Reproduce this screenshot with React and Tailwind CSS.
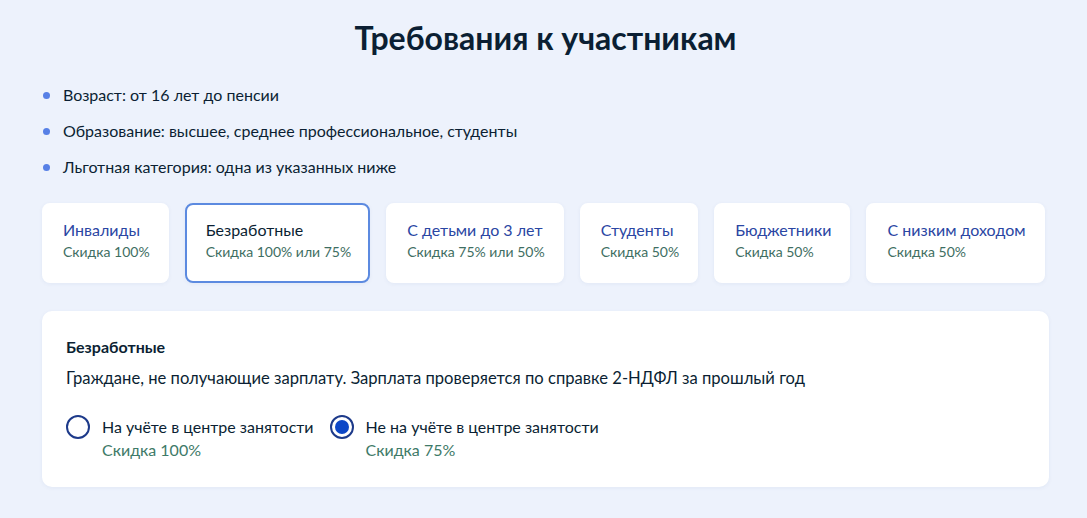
import { useState } from "react";

const categories = [
  { title: "Инвалиды", discount: "Скидка 100%" },
  { title: "Безработные", discount: "Скидка 100% или 75%" },
  { title: "С детьми до 3 лет", discount: "Скидка 75% или 50%" },
  { title: "Студенты", discount: "Скидка 50%" },
  { title: "Бюджетники", discount: "Скидка 50%" },
  { title: "С низким доходом", discount: "Скидка 50%" },
];

const requirements = [
  "Возраст: от 16 лет до пенсии",
  "Образование: высшее, среднее профессиональное, студенты",
  "Льготная категория: одна из указанных ниже",
];

const options = [
  { label: "На учёте в центре занятости", discount: "Скидка 100%" },
  { label: "Не на учёте в центре занятости", discount: "Скидка 75%" },
];

const Radio = ({ checked }) => (
  <div className="w-6 h-6 rounded-full border-2 border-[#1d3a8a] flex items-center justify-center shrink-0 bg-white">
    {checked && <div className="w-[14px] h-[14px] rounded-full bg-[#0d47c7]" />}
  </div>
);

export default function App() {
  const [active, setActive] = useState(1);
  const [option, setOption] = useState(1);

  return (
    <div className="min-h-screen bg-[#edf2fc] pl-[42px] pr-[38px] pt-[20px] font-['Lato','Liberation_Sans',sans-serif] text-[#0b1f33]">
      <h1 className="text-center text-[32px] font-bold leading-[36px]">
        Требования к участникам
      </h1>

      <ul className="mt-[27px] flex flex-col gap-[13px]">
        {requirements.map((r) => (
          <li key={r} className="flex items-center text-[16px] leading-[23px]">
            <span className="w-[7px] h-[7px] rounded-full bg-[#5780e6] ml-[1px] mr-[13px] mt-[2px]" />
            {r}
          </li>
        ))}
      </ul>

      <div className="mt-[25px] flex gap-[16px]">
        {categories.map((c, i) => (
          <button
            key={c.title}
            onClick={() => setActive(i)}
            className={
              "h-[80px] rounded-[8px] bg-white pl-[19px] pr-[17px] pt-[15px] text-left flex flex-col justify-start shadow-[0_1px_4px_rgba(40,70,140,0.06)] " +
              (i === active ? "border-2 border-[#5c8ae0]" : "border-2 border-white")
            }
          >
            <span className={"text-[16px] leading-[20px] " + (i === active ? "text-[#0b1f33]" : "text-[#2a46a3]")}>
              {c.title}
            </span>
            <span className="text-[14px] leading-[18px] mt-[3px] text-[#3e6e62]">{c.discount}</span>
          </button>
        ))}
      </div>

      <div className="mt-[28px] bg-white rounded-[10px] px-[24px] pt-[26px] pb-[26px] shadow-[0_1px_4px_rgba(40,70,140,0.06)]">
        <div className="text-[16px] font-bold leading-[20px]">Безработные</div>
        <div className="mt-[10px] text-[16.6px] leading-[22px]">
          Граждане, не получающие зарплату. Зарплата проверяется по справке 2-НДФЛ за прошлый год
        </div>
        <div className="mt-[26px] flex gap-[16px]">
          {options.map((o, i) => (
            <button key={o.label} onClick={() => setOption(i)} className="flex items-start gap-[12px] text-left">
              <Radio checked={option === i} />
              <div className="flex flex-col">
                <span className="text-[16px] leading-[22px] pt-[1px]">{o.label}</span>
                <span className="text-[16px] leading-[22px] mt-[1px] text-[#3e7a68]">{o.discount}</span>
              </div>
            </button>
          ))}
        </div>
      </div>
    </div>
  );
}
